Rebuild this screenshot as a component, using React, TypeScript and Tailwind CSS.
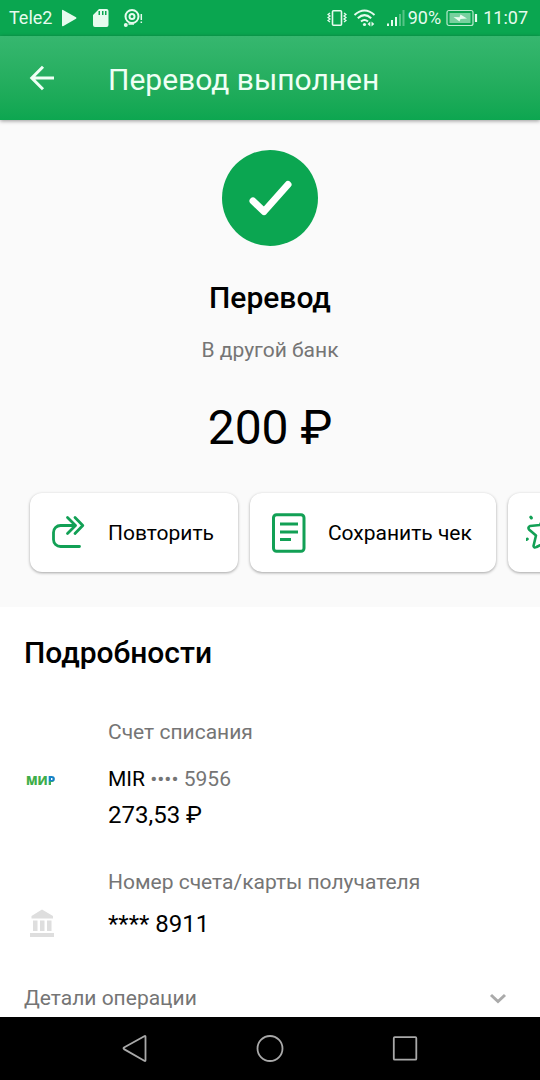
import type { ReactNode } from 'react';

const actions = [
  { id: 'repeat', label: 'Повторить', icon: <RepeatIcon /> },
  { id: 'receipt', label: 'Сохранить чек', icon: <ReceiptIcon /> }
];

function RepeatIcon() {
  return (
    <svg className="h-10 w-9 shrink-0" viewBox="0 0 36 40" fill="none" stroke="#12a055" strokeWidth="2.8" strokeLinecap="round" strokeLinejoin="round">
      <path d="M25 12.500H10.500A7 7 0 0 0 3.500 19.500V26.500A7 7 0 0 0 10.500 33.500H29.500" />
      <path d="M17.500 4.500L25.500 12.500L17.500 20.500" />
      <path d="M25 4.500L32.800 12.500L25 20.500" />
    </svg>
  );
}

function ReceiptIcon() {
  return (
    <svg className="h-10 w-9 shrink-0" viewBox="0 0 36 40" fill="none" stroke="#12a055" strokeWidth="3">
      <rect x="3.500" y="1.800" width="30.500" height="36.400" rx="3" />
      <path d="M10 11H28M10 19H28M10 26.500H21" />
    </svg>
  );
}

function StarIcon() {
  return (
    <svg className="size-10 shrink-0" viewBox="0 0 40 40" fill="none" stroke="#12a055" strokeWidth="2.600" strokeLinecap="round" strokeLinejoin="round">
      <path d="M4 13Q1.500 14.500 3 16.500L10 22.500L7.500 33Q8 35.500 10.500 34L20 29L29 34Q31 35 31.500 33L30 22.500L36 16Q37.500 14.500 36 13L26 12L21.500 3Q20 1 18.500 3L14 12Z" />
      <path d="M4.800 4.200L5.400 5M0.500 26.500L1.300 26" strokeWidth="3" />
    </svg>
  );
}

function StatusBar() {
  return (
    <div className="flex h-9 shrink-0 items-center justify-between bg-[#0aa650] pr-3 pl-[9px] text-lg leading-6 text-[#e6fbee]">
      <div className="flex items-center">
        <span>Tele2</span>
        <svg className="ml-[9px] h-6 w-4" viewBox="0 0 16 24" fill="currentColor">
          <path d="M1 4.500Q1 3.500 2 4L15 11.300Q16 12 15 12.700L2 20.200Q1 20.500 1 19.500Z" />
        </svg>
        <svg className="ml-[14px] h-6 w-5" viewBox="0 0 20 24" fill="currentColor">
          <path fillRule="evenodd" d="M8 3H15.500Q17.500 3 17.500 5V19Q17.500 21 15.500 21H4Q2 21 2 19V9ZM7.500 5V9H9V5ZM11 5V9H12.500V5ZM14 5V9H15.500V5Z" />
        </svg>
        <svg className="ml-3 h-6 w-5" viewBox="0 0 20 24" fill="none" stroke="currentColor" strokeWidth="2">
          <circle cx="9" cy="10.500" r="6.500" />
          <circle cx="9" cy="10.500" r="2.500" />
          <circle cx="2.800" cy="19" r="1" fill="currentColor" />
          <path d="M5.500 18L11 18M18.300 8V14M18.300 15.500V17" strokeWidth="1.500" />
        </svg>
      </div>
      <div className="flex items-center">
        <svg className="h-6 w-5" viewBox="0 0 20 24" fill="none" stroke="currentColor" strokeWidth="1.600">
          <rect x="5.500" y="4.800" width="9" height="14.500" rx="1" />
          <path d="M3 7L1 8.500L3 10L1 11.500L3 13L1 14.500L3 16M17 7L19 8.500L17 10L19 11.500L17 13L19 14.500L17 16" strokeWidth="1.300" />
        </svg>
        <svg className="ml-[6px] h-6 w-6" viewBox="0 0 24 24" fill="none" stroke="currentColor" strokeWidth="2">
          <path d="M1.500 9Q11.500 0 21.500 9M4.800 12.300Q11.500 6 18.200 12.300M8 15.600Q11.500 12.500 15 15.600" />
          <circle cx="11.500" cy="18.500" r="1.600" fill="currentColor" stroke="none" />
          <path d="M17.300 15.500V20.500L14.500 18ZM18.500 15.500V20.500L21.300 18Z" fill="currentColor" stroke="none" />
        </svg>
        <svg className="ml-2 h-6 w-5" viewBox="0 0 20 24" fill="currentColor">
          <path d="M2 17.500H4V20H2ZM6 14H8V20H6ZM10 11H12V20H10Z" />
          <path d="M14 8H16V20H14ZM17.500 4H19.500V20H17.500Z" opacity="0.350" />
        </svg>
        <span className="ml-[3px]">90%</span>
        <svg className="ml-[5px] h-6 w-8" viewBox="0 0 32 24" fill="none" stroke="currentColor" strokeWidth="1.200">
          <rect x="1" y="4.500" width="26" height="15" rx="2" opacity="0.800" />
          <rect x="3.500" y="7" width="21" height="10" fill="currentColor" stroke="none" opacity="0.500" />
          <path d="M7.500 11L13.500 11.200L14.500 8.500L21 12.500L14.500 13L13.500 15.500Z" fill="currentColor" stroke="none" />
          <path d="M30 8V16" strokeWidth="2.200" />
        </svg>
        <span className="ml-[5px]">11:07</span>
      </div>
    </div>
  );
}

function DetailRow({ label, icon, children }: { label: string; icon: ReactNode; children: ReactNode }) {
  return (
    <div>
      <div className="pl-21 text-[21px] leading-7 text-[#757575]">{label}</div>
      <div className="flex">
        <div className="w-21 shrink-0">{icon}</div>
        <div className="text-black">{children}</div>
      </div>
    </div>
  );
}

export default function App() {
  return (
    <div className="flex h-screen flex-col overflow-hidden bg-white font-['Roboto',sans-serif] text-black">
      <StatusBar />
      <header className="z-10 flex h-21 shrink-0 items-center bg-linear-to-b from-[#36b76f] to-[#0ca650] px-6 text-[#effff5] shadow-[0_1px_4px_rgba(0,0,0,0.4)]">
        <button className="w-21" aria-label="Назад">
          <svg className="size-9" viewBox="0 0 36 36" fill="none" stroke="currentColor" strokeWidth="3">
            <path d="M30 18H8M19 6.800L7.800 18L19 29.200" />
          </svg>
        </button>
        <h1 className="pt-1 text-3xl leading-9">Перевод выполнен</h1>
      </header>

      <main className="min-h-0 flex-1 overflow-hidden">
        <section className="bg-[#fafafa] pt-[30px] pb-[35px] text-center">
          <div className="mx-auto flex size-24 items-center justify-center rounded-full bg-[#0ba651]">
            <svg className="size-12" viewBox="0 0 48 48" fill="none" stroke="white" strokeWidth="7" strokeLinecap="round" strokeLinejoin="round">
              <path d="M7 27L18 37.500L42 10.500" />
            </svg>
          </div>
          <h2 className="mt-[34px] text-3xl leading-9 font-medium">Перевод</h2>
          <p className="mt-5 text-[21px] leading-7 text-[#757575]">В другой банк</p>
          <p className="mt-9 text-5xl leading-14">200 ₽</p>
          <div className="mt-[37px] flex gap-3 overflow-x-clip pl-[30px]">
            {actions.map((a) => (
              <button
                key={a.id}
                className="flex h-[79px] shrink-0 items-center gap-[22px] rounded-xl bg-white pr-6 pl-5 text-[21px] leading-7 shadow-[0_1px_3px_rgba(0,0,0,0.35)]"
              >
                {a.icon}
                {a.label}
              </button>
            ))}
            <button
              aria-label="В избранное"
              className="flex h-[79px] w-60 shrink-0 items-center rounded-xl bg-white pl-[18px] shadow-[0_1px_3px_rgba(0,0,0,0.35)]"
            >
              <StarIcon />
            </button>
          </div>
        </section>

        <section className="px-6 pt-7">
          <h2 className="text-3xl leading-9 font-medium">Подробности</h2>
          <div className="mt-[47px] flex flex-col gap-[39px]">
            <DetailRow
              label="Счет списания"
              icon={
                <div className="mt-[27px] ml-[2px] font-['Open_Sans',sans-serif] text-xs leading-4 font-extrabold text-[#3fae49]">
                  МИ
                  <span className="bg-linear-to-b from-[#1683c6] from-50% to-[#3fae49] to-60% bg-clip-text text-transparent">Р</span>
                </div>
              }
            >
              <div className="mt-[19px] text-[21px] leading-7">
                MIR <span className="text-[#757575]">•••• 5956</span>
              </div>
              <div className="mt-2 text-2xl leading-7">273,53 ₽</div>
            </DetailRow>
            <DetailRow
              label="Номер счета/карты получателя"
              icon={
                <svg className="mt-3 size-9" viewBox="0 0 36 36" fill="#dedede">
                  <path d="M18 1.500L29 8V10.500H7.500V8ZM9 12.500H13.500V23H9ZM16 12.500H20.500V23H16ZM23 12.500H27.500V23H23ZM6 25H30V29H6Z" />
                </svg>
              }
            >
              <div className="mt-[14px] text-2xl leading-7">**** 8911</div>
            </DetailRow>
          </div>
          <button className="mt-10 flex w-full items-center justify-between text-[21px] leading-7 text-[#757575]">
            Детали операции
            <svg className="mr-2 size-5" viewBox="0 0 20 20" fill="none" stroke="#aaa" strokeWidth="3">
              <path d="M3 7L10 13.500L17 7" />
            </svg>
          </button>
        </section>
      </main>

      <nav className="flex h-[63px] shrink-0 items-center justify-center gap-[99px] bg-black text-[#a9a9a9]">
        <button aria-label="Back">
          <svg className="size-9" viewBox="0 0 36 36" fill="none" stroke="currentColor" strokeWidth="1.800" strokeLinejoin="round">
            <path d="M28.500 5.800Q28.500 4.500 27.300 5.200L7 16.500Q6 17.300 7 18.100L27.300 29.800Q28.500 30.500 28.500 29.200Z" />
          </svg>
        </button>
        <button aria-label="Home">
          <svg className="size-9" viewBox="0 0 36 36" fill="none" stroke="currentColor" strokeWidth="1.800">
            <circle cx="18" cy="17.500" r="12.500" />
          </svg>
        </button>
        <button aria-label="Recent apps">
          <svg className="size-9" viewBox="0 0 36 36" fill="none" stroke="currentColor" strokeWidth="1.800" strokeLinejoin="round">
            <rect x="6.800" y="6.200" width="22.500" height="22.500" rx="1" />
          </svg>
        </button>
      </nav>
    </div>
  );
}
